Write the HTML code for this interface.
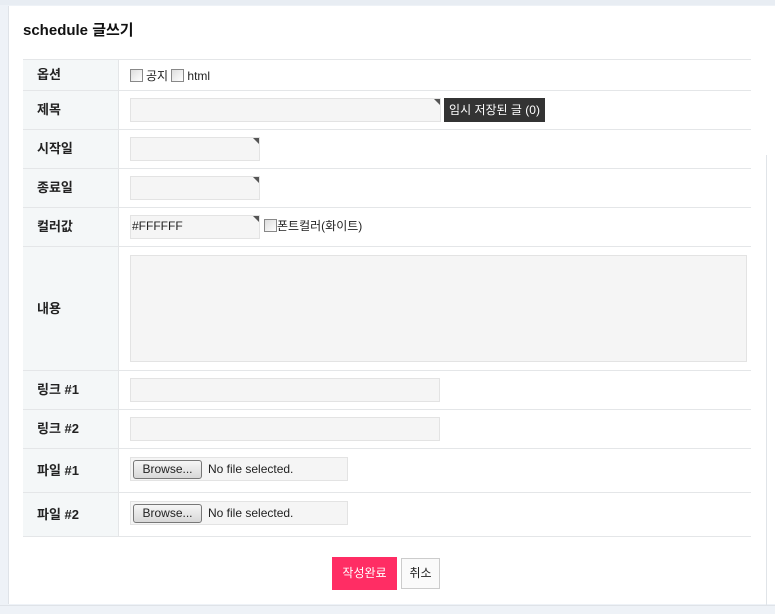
<!DOCTYPE html>
<html><head><meta charset="utf-8"><style>
body{margin:0;width:775px;height:613px;background:#eef2f7;font-family:"Liberation Sans","Noto Sans CJK KR",sans-serif;font-size:12px;color:#222;position:relative;overflow:hidden}
.panel{position:absolute;left:8px;top:6px;width:767px;height:598px;background:#fff;border-left:1px solid #dfe3e8}
.title{position:absolute;left:23px;top:19px;font-size:15px;font-weight:bold;color:#111}
.row{position:absolute;left:23px;width:728px;border-bottom:1px solid #e4e6e8}
.lab{position:absolute;left:0;top:0;bottom:0;width:96px;background:#f4f7f8;border-right:1px solid #e4e6e8;font-weight:bold;font-size:13px;display:flex;align-items:center;padding-left:14px;padding-bottom:3px;box-sizing:border-box}
.in{position:absolute;background:#f5f5f5;border:1px solid #e3e3e3;box-sizing:border-box}
.tri{position:absolute;right:0;top:0;width:0;height:0;border-top:6px solid #555;border-left:6px solid transparent}
.cb{display:inline-block;width:11px;height:11px;border:1px solid #888;background:linear-gradient(135deg,#ddd,#fff);vertical-align:-2px;margin-right:3px}
.txt{position:absolute;font-size:12px}
.brw{position:absolute;left:2px;top:2px;width:69px;height:19px;border:1px solid #777;border-radius:3px;background:linear-gradient(#f6f6f6,#d8d8d8);box-sizing:border-box;font-size:12px;text-align:center;line-height:17px}
</style></head><body>
<div style="position:absolute;left:0;top:0;width:775px;height:5px;background:#e8edf3"></div>
<div class="panel"></div>
<div style="position:absolute;left:766px;top:155px;width:1px;height:450px;background:#e0e4e8"></div>
<div class="title">schedule 글쓰기</div>
<div style="position:absolute;left:23px;top:59px;width:728px;height:1px;background:#e4e6e8"></div>
<div class="row" style="top:60px;height:30px"><div class="lab">옵션</div>
<div class="txt" style="left:107px;top:7px"><span class="cb"></span>공지 <span class="cb"></span>html</div></div>
<div class="row" style="top:91px;height:38px"><div class="lab">제목</div>
<div class="in" style="left:107px;top:7px;width:311px;height:24px"><div class="tri"></div></div>
<div style="position:absolute;left:421px;top:7px;width:101px;height:24px;background:#333;color:#fff;font-size:12px;line-height:24px;text-align:center;overflow:hidden;white-space:nowrap">임시 저장된 글 (0)</div></div>
<div class="row" style="top:130px;height:38px"><div class="lab">시작일</div>
<div class="in" style="left:107px;top:7px;width:130px;height:24px"><div class="tri"></div></div></div>
<div class="row" style="top:169px;height:38px"><div class="lab">종료일</div>
<div class="in" style="left:107px;top:7px;width:130px;height:24px"><div class="tri"></div></div></div>
<div class="row" style="top:208px;height:38px"><div class="lab">컬러값</div>
<div class="in" style="left:107px;top:7px;width:130px;height:24px;line-height:21px;padding-left:1px">#FFFFFF<div class="tri"></div></div>
<div class="txt" style="left:241px;top:9px"><span class="cb" style="margin-right:0"></span>폰트컬러(화이트)</div></div>
<div class="row" style="top:247px;height:123px"><div class="lab">내용</div>
<div class="in" style="left:107px;top:8px;width:617px;height:107px"></div></div>
<div class="row" style="top:371px;height:38px"><div class="lab">링크 #1</div>
<div class="in" style="left:107px;top:7px;width:310px;height:24px"></div></div>
<div class="row" style="top:410px;height:38px"><div class="lab">링크 #2</div>
<div class="in" style="left:107px;top:7px;width:310px;height:24px"></div></div>
<div class="row" style="top:449px;height:43px"><div class="lab">파일 #1</div>
<div class="in" style="left:107px;top:8px;width:218px;height:24px"><div class="brw">Browse...</div><div class="txt" style="left:77px;top:4px">No file selected.</div></div></div>
<div class="row" style="top:493px;height:43px"><div class="lab">파일 #2</div>
<div class="in" style="left:107px;top:8px;width:218px;height:24px"><div class="brw">Browse...</div><div class="txt" style="left:77px;top:4px">No file selected.</div></div></div>
<div style="position:absolute;left:332px;top:557px;width:65px;height:33px;background:#ff2d64;color:#fff;font-size:12px;line-height:33px;text-align:center">작성완료</div>
<div style="position:absolute;left:401px;top:558px;width:39px;height:31px;background:#fafafa;border:1px solid #ccc;box-sizing:border-box;font-size:12px;line-height:29px;text-align:center">취소</div>
<div style="position:absolute;left:0;top:605px;width:775px;height:8px;background:#eef2f7;border-top:1px solid #dfe3e8"></div>
</body></html>
